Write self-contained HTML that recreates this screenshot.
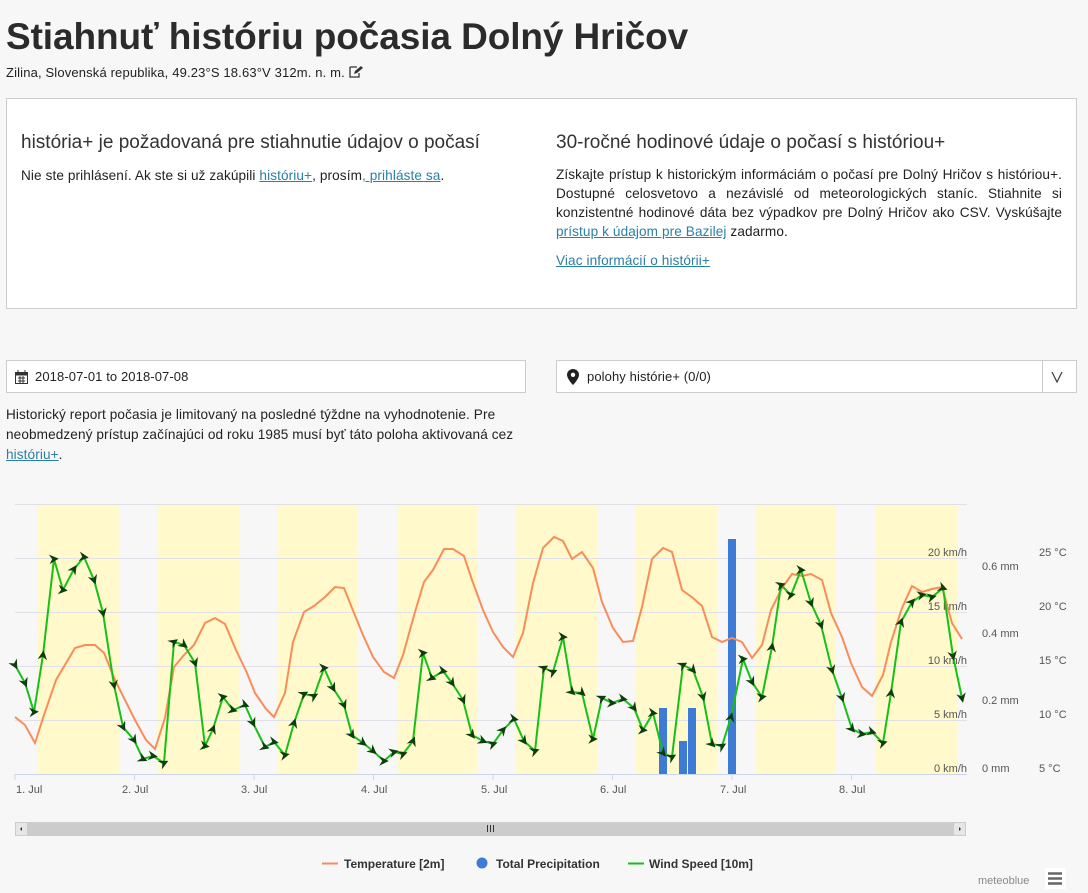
<!DOCTYPE html>
<html><head><meta charset="utf-8"><style>
*{margin:0;padding:0;box-sizing:border-box}
body{width:1088px;height:893px;background:#f7f7f7;font-family:"Liberation Sans",sans-serif;color:#222;position:relative;overflow:hidden}
.a{position:absolute}
a{color:#2a7fa5;text-decoration:underline}
h1{position:absolute;left:6px;top:16px;font-size:37px;font-weight:bold;color:#2b2b2b;letter-spacing:-0.1px;white-space:nowrap}
.sub{left:6px;top:65px;font-size:13px;color:#222;letter-spacing:0.15px}
.box{left:6px;top:98px;width:1071px;height:211px;background:#fff;border:1px solid #ccc}
h2{position:absolute;font-size:19px;font-weight:normal;color:#333;white-space:nowrap}
p{font-size:13.6px;line-height:19px;letter-spacing:0.1px}
.inp{background:#fff;border:1px solid #ccc;height:33px;font-size:13px;letter-spacing:0.1px}
</style></head><body>
<h1>Stiahnuť históriu počasia Dolný Hričov</h1>
<div class="a sub">Zilina, Slovenská republika, 49.23°S 18.63°V 312m. n. m. <svg width="14" height="12" viewBox="0 0 14 12" style="vertical-align:-1px"><path d="M1 1h7M1 1v10h9V7" fill="none" stroke="#333" stroke-width="1.3"/><path d="M5 8l1-3 6-5 2 2-6 5z" fill="#333"/></svg></div>
<div class="a box">
<h2 style="left:14px;top:33px">história+ je požadovaná pre stiahnutie údajov o počasí</h2>
<p class="a" style="left:14px;top:67px;white-space:nowrap">Nie ste prihlásení. Ak ste si už zakúpili <a>históriu+</a>, prosím<a>, prihláste sa</a>.</p>
<h2 style="left:549px;top:33px">30-ročné hodinové údaje o počasí s históriou+</h2>
<p class="a" style="left:549px;top:66px;width:506px;text-align:justify">Získajte prístup k historickým informáciám o počasí pre Dolný Hričov s históriou+. Dostupné celosvetovo a nezávislé od meteorologických staníc. Stiahnite si konzistentné hodinové dáta bez výpadkov pre Dolný Hričov ako CSV. Vyskúšajte <a>prístup k údajom pre Bazilej</a> zadarmo.</p>
<p class="a" style="left:549px;top:152px"><a>Viac informácií o histórii+</a></p>
</div>
<div class="a inp" style="left:6px;top:360px;width:520px"><svg class="a" style="left:8px;top:9px" width="13" height="14" viewBox="0 0 13 14"><rect x="0.5" y="2.5" width="12" height="11" fill="none" stroke="#333"/><rect x="0.5" y="2.5" width="12" height="3" fill="#333"/><path d="M3 0v4M10 0v4M3 8h7M3 11h7M5 6v7M8 6v7" stroke="#333"/></svg><span class="a" style="left:28px;top:8px">2018-07-01 to 2018-07-08</span></div>
<div class="a inp" style="left:556px;top:360px;width:521px"><svg class="a" style="left:10px;top:8px" width="12" height="16" viewBox="0 0 12 16"><path d="M6 0C2.7 0 0 2.6 0 5.8 0 10 6 16 6 16s6-6 6-10.2C12 2.6 9.3 0 6 0z" fill="#222"/><circle cx="6" cy="5.8" r="2.2" fill="#fff"/></svg><span class="a" style="left:30px;top:8px">polohy histórie+ (0/0)</span><div class="a" style="left:485px;top:0;width:1px;height:31px;background:#ccc"></div><svg class="a" style="left:494px;top:10px" width="12" height="12" viewBox="0 0 12 12"><path d="M1 1l5 10 5-10" fill="none" stroke="#444" stroke-width="1.3"/></svg></div>
<p class="a" style="left:6px;top:405px;width:512px;line-height:20px">Historický report počasia je limitovaný na posledné týždne na vyhodnotenie. Pre neobmedzený prístup začínajúci od roku 1985 musí byť táto poloha aktivovaná cez <a>históriu+</a>.</p>

<svg class="a" style="left:0;top:495px" width="1088" height="398" viewBox="0 495 1088 398" font-family="Liberation Sans, sans-serif">
<defs><marker id="m" viewBox="0 0 10 10" refX="5" refY="5" markerWidth="6" markerHeight="6" orient="auto"><path d="M1 1L9 5 1 9 3.5 5z" fill="#0d3d0d"/></marker></defs>
<g fill="#fff9cc"><rect x="37" y="504" width="83" height="270"/><rect x="157" y="504" width="82" height="270"/><rect x="277" y="504" width="81" height="270"/><rect x="397" y="504" width="80" height="270"/><rect x="516" y="504" width="82" height="270"/><rect x="636" y="504" width="81" height="270"/><rect x="756" y="504" width="80" height="270"/><rect x="875" y="504" width="82" height="270"/></g>
<g stroke="#e0e0e6" stroke-width="1"><path d="M15 504.5H967M15 558.5H967M15 612.5H967M15 666.5H967M15 720.5H967"/></g>
<path d="M15 774.5H967" stroke="#ccd6eb"/>
<g stroke="#ccd6eb"><path d="M15 774v6M134.5 774v6M254 774v6M373.5 774v6M493 774v6M612.5 774v6M732 774v6M851.5 774v6"/></g>
<g font-size="11" fill="#555"><text x="16" y="793">1. Jul</text><text x="122" y="793">2. Jul</text><text x="241" y="793">3. Jul</text><text x="361" y="793">4. Jul</text><text x="481" y="793">5. Jul</text><text x="600" y="793">6. Jul</text><text x="720" y="793">7. Jul</text><text x="839" y="793">8. Jul</text></g>
<g font-size="11" fill="#555" text-anchor="end"><text x="967" y="556">20 km/h</text><text x="967" y="610">15 km/h</text><text x="967" y="664">10 km/h</text><text x="967" y="718">5 km/h</text><text x="967" y="772">0 km/h</text></g>
<g font-size="11" fill="#555"><text x="982" y="570">0.6 mm</text><text x="982" y="637">0.4 mm</text><text x="982" y="704">0.2 mm</text><text x="982" y="772">0 mm</text><text x="1039" y="556">25 °C</text><text x="1039" y="610">20 °C</text><text x="1039" y="664">15 °C</text><text x="1039" y="718">10 °C</text><text x="1039" y="772">5 °C</text></g>
<g fill="#3d7bd4"><rect x="659" y="708" width="8" height="66"/><rect x="679" y="741" width="8" height="33"/><rect x="688" y="708" width="8" height="66"/><rect x="728" y="539" width="8" height="235"/></g>
<polyline fill="none" stroke="#f98d5a" stroke-width="2" points="15,717 25,725 35,743 44,715 56,680 75,648 85,645 95,645 104,653 115,680 125,700 135,720 146,740 155,749 165,718 174,667 184,655 194,645 205,623 215,618 225,624 236,650 247,673 255,693 266,709 274,717 285,693 293,642 304,612 314,606 325,597 335,587 344,588 352,608 363,635 373,657 384,672 394,678 403,655 415,612 424,582 433,570 444,549 453,549 464,556 472,580 483,610 493,632 503,647 513,657 523,633 533,583 543,548 554,537 563,541 572,559 582,552 593,568 602,602 613,628 623,642 633,641 642,607 652,559 663,548 672,552 682,590 693,598 702,606 712,637 722,642 732,638 742,642 752,658 762,645 771,610 782,588 792,574 802,576 811,574 822,580 831,613 842,637 851,663 862,687 872,696 883,675 891,642 902,608 912,586 922,592 932,589 942,587 952,623 962,639"/>
<polyline fill="none" stroke="#16c016" stroke-width="2" marker-start="url(#m)" marker-mid="url(#m)" marker-end="url(#m)" points="15,665 25,683 34,712 43,655 54,559 63,590 74,569 84,557 94,580 103,613 114,685 123,727 134,740 143,759 153,756 164,763 174,642 184,645 195,663 205,746 213,729 223,697 233,710 245,705 253,723 265,747 274,742 285,755 294,723 304,694 314,696 324,668 333,688 344,705 352,735 363,743 373,751 384,761 394,752 403,754 413,741 423,653 432,678 443,671 452,683 463,700 472,735 483,741 493,744 503,730 514,719 524,741 535,751 544,668 553,672 563,637 572,692 582,693 593,739 602,698 612,703 623,699 634,708 643,730 653,713 663,753 672,757 683,665 693,670 703,697 712,744 722,746 731,717 743,659 752,682 762,697 772,647 781,585 791,595 801,570 811,603 821,625 832,670 842,698 852,729 862,734 872,732 883,743 891,693 901,622 912,602 922,595 932,597 943,588 953,656 962,698"/>
<rect x="15" y="822" width="951" height="14" fill="#cccccc"/>
<rect x="15.5" y="822.5" width="12" height="13" fill="#e6e6e6" stroke="#ccc"/><rect x="953.5" y="822.5" width="12" height="13" fill="#e6e6e6" stroke="#ccc"/>
<path d="M20 829l2-2v4zM961 829l-2-2v4z" fill="#333"/>
<path d="M487.5 825v7M490.5 825v7M493.5 825v7" stroke="#333"/>
<g font-size="12" font-weight="bold" fill="#333"><path d="M322 863.5h16" stroke="#f98d5a" stroke-width="2"/><text x="344" y="868">Temperature [2m]</text><circle cx="482" cy="863" r="5.5" fill="#3d7bd4"/><text x="496" y="868">Total Precipitation</text><path d="M628 863.5h16" stroke="#16c016" stroke-width="2"/><text x="649" y="868">Wind Speed [10m]</text></g>
<text x="978" y="884" font-size="11" fill="#888">meteoblue</text>
<rect x="1045" y="868" width="21" height="21" fill="#fff"/>
<path d="M1048 873.5h14M1048 878.5h14M1048 883.5h14" stroke="#666" stroke-width="2.5"/>
</svg>
</body></html>
